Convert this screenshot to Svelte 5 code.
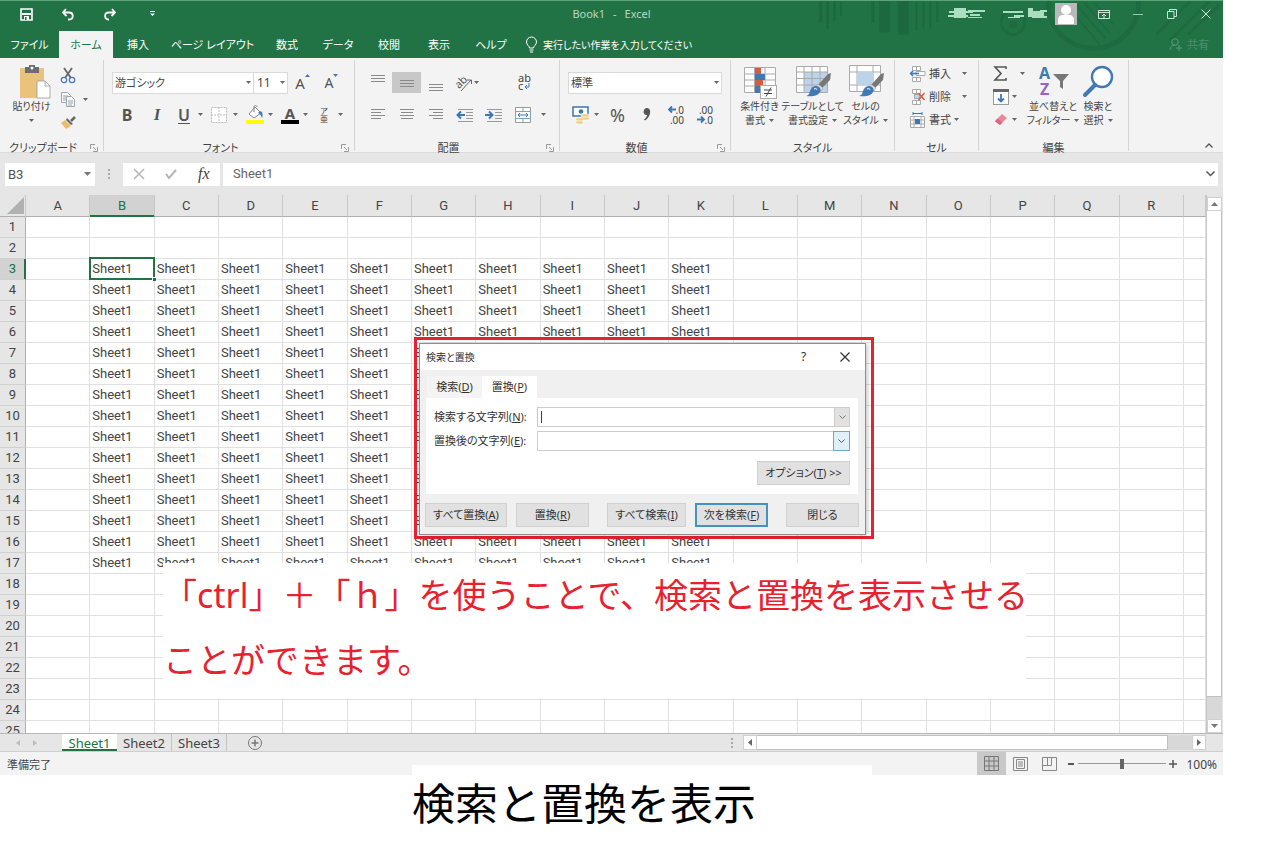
<script>
  const tabs = ['ファイル', 'ホーム', '挿入', 'ページ レイアウト', '数式', 'データ', '校閲', '表示', 'ヘルプ'];
  const columns = 'ABCDEFGHIJKLMNOPQR'.split('');
  const rows = Array.from({ length: 25 }, (_, i) => i + 1);
  const sheets = ['Sheet1', 'Sheet2', 'Sheet3'];
  const selected = { column: 'B', row: 3 };

  function cellValue(column, row) {
    return row >= 3 && row <= 17 && column >= 'B' && column <= 'K' ? 'Sheet1' : '';
  }
  const isSelected = (column, row) => column === selected.column && row === selected.row;

  const alignTop = [[0, 2, 14], [0, 5, 14], [0, 8, 14]];
  const alignMiddle = [[0, 7, 14], [0, 10, 14], [0, 13, 14]];
  const alignBottom = [[0, 11, 14], [0, 14, 14], [0, 17, 14]];
  const left = [[0, 4, 14], [0, 7, 10], [0, 10, 14], [0, 13, 10]];
  const center = [[0, 4, 14], [1, 7, 12], [0, 10, 14], [1, 13, 12]];
  const right = [[0, 4, 14], [4, 7, 10], [0, 10, 14], [4, 13, 10]];
</script>

{#snippet arrow()}
  <svg class="arrow" width="5" height="3" viewBox="0 0 5 3" aria-hidden="true"><path d="M0 0h5L2.500 3z" fill="#666" /></svg>
{/snippet}

{#snippet lines(list, name, active = false)}
  <button class="tool cell" class:active aria-label={name}>
    <svg width="14" height="20" viewBox="0 0 14 20">
      {#each list as [x, y, w]}
        <rect {x} {y} width={w} height="1" fill="#8a8a8a" />
      {/each}
    </svg>
  </button>
{/snippet}

{#snippet launcher(name)}
  <button class="launcher" aria-label={name}>
    <svg width="8" height="8" viewBox="0 0 8 8" fill="none" stroke="#999"><path d="M.5 5V.5H5M3 3l3 3M7.500 3v4.500H3" /></svg>
  </button>
{/snippet}

{#snippet brush()}
  <path d="M34 9l3-1-1 7-8 8-4-3z" fill="#777" />
  <path d="M24 19l5 4-2 3-5-4z" fill="#ddd" stroke="#999" stroke-width=".6" />
  <path d="M22 21c3 0 6 3 4 6-2 4-8 5-14 4 4-1 3-4 5-7 1-2 3-3 5-3z" fill="#4179b5" />
  <path d="M20 24c2-1 3 0 3 1" stroke="#fff" fill="none" />
{/snippet}

<div class="window">
  <header class="top">
    <svg class="pattern" width="430" height="58" viewBox="0 0 430 58" aria-hidden="true">
      <g fill="#1d693f">
        <rect x="23" width="3" height="22" /><rect x="30" width="3" height="28" /><rect x="37" width="3" height="20" />
        <rect x="44" width="2" height="15" /><rect x="76" width="3" height="22" /><rect x="84" width="11" height="32" />
        <rect x="103" width="11" height="34" /><rect x="121" width="2" height="30" /><rect x="128" width="2" height="28" />
        <rect x="135" width="2" height="28" /><rect x="142" width="2" height="22" />
      </g>
      <g fill="none" stroke="#1e6b41" stroke-width="5">
        <circle cx="302" cy="2" r="46" />
        <circle cx="220" cy="22" r="12" stroke-width="3" />
        <path d="M273 2l35 42M283 2l31 36M293 2l25 30M303 2l19 22" stroke-width="2" />
        <path d="M366 34L401 0M380 40L420 0M398 34L430 4" stroke-width="3" />
      </g>
      <circle cx="220" cy="24" r="4" fill="#1e6b41" />
    </svg>

    <div class="titlebar">
      <div class="quick">
        <button aria-label="上書き保存">
          <svg width="13" height="13" viewBox="0 0 13 13"><path d="M1 1h11v11H1z" fill="none" stroke="#fff" stroke-width="1.600" /><path d="M2 5h9v2H2zM4 8h5v4H4z" fill="#fff" /><path d="M5 9h1.500v3H5z" fill="#217346" /></svg>
        </button>
        <button aria-label="元に戻す">
          <svg width="14" height="13" viewBox="0 0 14 13" fill="none" stroke="#fff" stroke-width="1.800"><path d="M5 1L2 4.500 5.500 8M2 4.500h6c5 0 5 7 0 7H7" /></svg>
        </button>
        <button aria-label="やり直し">
          <svg width="14" height="13" viewBox="0 0 14 13" fill="none" stroke="#fff" stroke-width="1.800"><path d="M9 1l3 3.500L8.500 8M12 4.500H6c-5 0-5 6-1 7h1" /></svg>
        </button>
        <button aria-label="クイック アクセスのカスタマイズ">
          <svg width="5" height="6" viewBox="0 0 5 6" fill="#fff"><path d="M0 0h5v1H0zM0 2.500h5L2.500 5z" /></svg>
        </button>
      </div>
      <div class="title"><span>Book1</span><span>-</span><span>Excel</span></div>
      <div class="account">
        <svg class="names" width="100" height="16" viewBox="0 0 100 16" aria-hidden="true" fill="#a9dfc0">
          <rect x="1" y="5" width="24" height="2" /><rect x="6" y="2" width="12" height="10" /><rect x="0" y="9" width="20" height="2" /><rect x="20" y="4" width="17" height="2" /><rect x="22" y="8" width="10" height="2" /><rect x="20" y="11" width="14" height="1" />
          <rect x="55" y="5" width="20" height="2" /><rect x="66" y="9" width="10" height="2" /><rect x="60" y="11" width="12" height="1" /><rect x="80" y="2" width="5" height="9" /><rect x="84" y="5" width="12" height="7" /><rect x="92" y="4" width="7" height="2" /><rect x="92" y="10" width="7" height="2" />
        </svg>
        <svg class="avatar" width="22" height="22" viewBox="0 0 22 22" aria-hidden="true"><rect width="22" height="22" fill="#b9b9b9" /><circle cx="11" cy="7" r="5" fill="#fff" /><path d="M3 21v-4c0-3 2-5 5-5h6c3 0 5 2 5 5v4z" fill="#fff" /></svg>
        <button aria-label="リボンの表示オプション"><svg width="12" height="9" viewBox="0 0 12 9" fill="none" stroke="#cfe5d8"><path d="M.5 .5h11v8H.5zM.5 2.500h11M6 8V4M4 6l2-2 2 2" /></svg></button>
        <button aria-label="最小化"><svg width="10" height="9" viewBox="0 0 10 9" stroke="#9cc8af"><path d="M0 4.500h10" /></svg></button>
        <button aria-label="元に戻す（縮小）"><svg width="10" height="10" viewBox="0 0 10 10" fill="none" stroke="#cfe5d8"><path d="M.5 2.500h6.500v7H.5zM2.500 2.500v-2h7v7H7" /></svg></button>
        <button aria-label="閉じる"><svg width="10" height="10" viewBox="0 0 10 10" stroke="#cfe5d8"><path d="M.5 .5l9 9M9.500 .5l-9 9" /></svg></button>
      </div>
    </div>

    <nav class="tabs">
      {#each tabs as tab, i}
        <button class:current={i === 1}>{tab}</button>
      {/each}
      <button class="tell">
        <svg width="11" height="16" viewBox="0 0 11 16" fill="none" stroke="#fff"><path d="M3.500 11c0-2-3-3-3-6a5 5 0 0 1 10 0c0 3-3 4-3 6zM3.500 13h4M4 15h3" /></svg>
        実行したい作業を入力してください
      </button>
      <button class="share">
        <svg width="13" height="13" viewBox="0 0 13 13" fill="none" stroke="#5b9a78"><circle cx="6" cy="4" r="3.300" /><path d="M1 12c0-3 2-5 5-5M10 7v6M7 10h6" /></svg>
        共有
      </button>
    </nav>
  </header>

  <section class="ribbon" aria-label="ホーム">
    <div class="group clipboard">
      <div class="body">
        <button class="big paste">
          <svg width="32" height="34" viewBox="0 0 32 34"><rect x="1" y="3" width="24" height="30" fill="#e9c27c" /><path d="M6 2h4V0h6v2h4v6H6z" fill="#6b6b73" /><circle cx="13" cy="3" r="1.500" fill="#fff" /><path d="M18 16h8l5 5v12H18z" fill="#fff" stroke="#999" stroke-width=".8" /><path d="M26 16v5h5" fill="none" stroke="#999" stroke-width=".8" /></svg>
          <span>貼り付け</span>
          {@render arrow()}
        </button>
        <div class="stack">
          <button class="tool" aria-label="切り取り"><svg width="16" height="17" viewBox="0 0 16 17" fill="none"><path d="M4 1l7 10M12 1L5 11" stroke="#666" stroke-width="1.800" /><circle cx="4" cy="13" r="2.700" stroke="#4179b5" stroke-width="1.200" /><circle cx="12" cy="13" r="2.700" stroke="#4179b5" stroke-width="1.200" /></svg></button>
          <button class="tool" aria-label="コピー"><svg width="16" height="17" viewBox="0 0 16 17" fill="#f8f8f8" stroke="#9aa5ae"><path d="M1.500 1.500h6l3 3v7h-9zM3 5h5M3 7h5M3 9h5" /><path d="M6.500 5.500h5l3 3v7h-8zM8 10h5M8 12h5M8 14h4" /></svg><span class="push">{@render arrow()}</span></button>
          <button class="tool" aria-label="書式のコピー/貼り付け"><svg width="16" height="14" viewBox="0 0 16 14"><path d="M15 1l-4 4" stroke="#666" stroke-width="2.500" /><path d="M7 2l6 6-2 1-5-5z" fill="#666" /><path d="M5 4l6 6-5 3-5-6z" fill="#e9bd6b" /></svg></button>
        </div>
      </div>
      <footer><span></span><span>クリップボード</span>{@render launcher('クリップボードの設定')}</footer>
    </div>

    <div class="group font">
      <div class="body rows">
        <div class="line">
          <select class="combo face" aria-label="フォント"><option>游ゴシック</option></select>
          <select class="combo size" aria-label="フォント サイズ"><option>11</option></select>
          <button class="tool grow" aria-label="フォント サイズの拡大">A<svg width="5" height="3" viewBox="0 0 5 3"><path d="M0 3h5L2.500 0z" fill="#4179b5" /></svg></button>
          <button class="tool grow small" aria-label="フォント サイズの縮小">A<svg width="5" height="3" viewBox="0 0 5 3"><path d="M0 0h5L2.500 3z" fill="#4179b5" /></svg></button>
        </div>
        <div class="line">
          <button class="tool letter"><b>B</b></button>
          <button class="tool letter"><i>I</i></button>
          <button class="tool split letter"><u>U</u>{@render arrow()}</button>
          <button class="tool split" aria-label="罫線"><svg width="16" height="16" viewBox="0 0 16 16" fill="#fff" stroke="#bbb"><path d="M.5 .5h15v15H.5zM8 0v16M0 8h16" stroke-dasharray="2 1" /></svg>{@render arrow()}</button>
          <button class="tool split" aria-label="塗りつぶしの色"><svg width="18" height="19" viewBox="0 0 18 19"><path d="M9 2l6 6-7 5-5-4z" fill="#fff" stroke="#888" /><path d="M8 7V2c0-2 3-2 3 0" fill="none" stroke="#888" /><path d="M14 6c3 1 3 4 2 7-1-2-1-4-4-5z" fill="#4179b5" /><rect y="15" width="18" height="4" fill="#ff0" /></svg>{@render arrow()}</button>
          <button class="tool split color" aria-label="フォントの色"><b>A</b>{@render arrow()}</button>
          <button class="tool split ruby" aria-label="ふりがな"><span><small>ア</small><small>亜</small></span>{@render arrow()}</button>
        </div>
      </div>
      <footer><span></span><span>フォント</span>{@render launcher('フォントの設定')}</footer>
    </div>

    <div class="group align">
      <div class="body rows">
        <div class="line">
          {@render lines(alignTop, '上揃え')}
          {@render lines(alignMiddle, '上下中央揃え', true)}
          {@render lines(alignBottom, '下揃え')}
          <button class="tool orient" aria-label="方向"><svg width="18" height="18" viewBox="0 0 18 18"><text x="0" y="12" font-size="11" transform="rotate(-45 6 9)" fill="#555">ab</text><path d="M6 17L16 6M12 6h4.500v4" fill="none" stroke="#666" /></svg>{@render arrow()}</button>
          <button class="tool cell" aria-label="折り返して全体を表示する"><svg width="16" height="18" viewBox="0 0 16 18"><text x="3" y="8" font-size="11" fill="#444">ab</text><text x="3" y="16" font-size="11" fill="#444">c</text><path d="M14 9v4h-4M12 11l-2 2 2 2" fill="none" stroke="#4179b5" /></svg></button>
        </div>
        <div class="line">
          {@render lines(left, '左揃え')}
          {@render lines(center, '中央揃え')}
          {@render lines(right, '右揃え')}
          <button class="tool cell" aria-label="インデントを減らす"><svg width="17" height="14" viewBox="0 0 17 14"><path d="M2 1.500h15M10 4.500h7M10 7.500h7M10 10.500h7M2 13.500h15" stroke="#999" /><path d="M9 7H2M5 3.500L1.500 7 5 10.500" stroke="#3b76b5" stroke-width="2" fill="none" /></svg></button>
          <button class="tool cell" aria-label="インデントを増やす"><svg width="17" height="14" viewBox="0 0 17 14"><path d="M2 1.500h15M10 4.500h7M10 7.500h7M10 10.500h7M2 13.500h15" stroke="#999" /><path d="M0 7h7M4 3.500L7.500 7 4 10.500" stroke="#3b76b5" stroke-width="2" fill="none" /></svg></button>
          <button class="tool cell" aria-label="セルを結合して中央揃え"><svg width="16" height="16" viewBox="0 0 16 16" fill="none"><path d="M.5 .5h15v15H.5zM8 0v4M8 12v4" stroke="#999" fill="#fff" /><path d="M.5 4.500h15v7H.5z" stroke="#7ba4cc" fill="#fff" /><path d="M3 8h10M5 6L3 8l2 2M11 6l2 2-2 2" stroke="#3b76b5" /></svg></button>
          <button class="tool drop" aria-label="結合の種類">{@render arrow()}</button>
        </div>
      </div>
      <footer><span></span><span>配置</span>{@render launcher('配置の設定')}</footer>
    </div>

    <div class="group number">
      <div class="body rows">
        <div class="line"><select class="combo format" aria-label="数値の書式"><option>標準</option></select></div>
        <div class="line">
          <button class="tool split money" aria-label="通貨表示形式"><svg width="18" height="18" viewBox="0 0 18 18"><rect x="1" y="1" width="15" height="9" fill="#fff" stroke="#3b76b5" stroke-width="1.500" /><circle cx="9" cy="5.500" r="2.300" fill="#3b76b5" /><g fill="#f0cd85" stroke="#fff" stroke-width=".5"><rect x="9" y="8" width="8" height="3" rx="1" /><rect x="9" y="11" width="8" height="3" rx="1" /><rect x="4" y="12" width="7" height="3" rx="1" /><rect x="4" y="15" width="7" height="3" rx="1" /></g></svg>{@render arrow()}</button>
          <button class="tool cell percent">%</button>
          <button class="tool cell" aria-label="桁区切りスタイル"><svg width="8" height="13" viewBox="0 0 8 13"><path d="M4 0c5 0 4 9-2 12.500l-1-1c2-1.500 3-3 3-4.500C-1 7 0 0 4 0z" fill="#555" /></svg></button>
          <button class="tool cell digits" aria-label="小数点以下の表示桁数を増やす"><span><svg width="8" height="7" viewBox="0 0 8 7"><path d="M8 3.500H1M4 .5l-3 3 3 3" stroke="#3b76b5" stroke-width="1.800" fill="none" /></svg>.0</span><span>.00</span></button>
          <button class="tool cell digits" aria-label="小数点以下の表示桁数を減らす"><span>.00</span><span><svg width="8" height="7" viewBox="0 0 8 7"><path d="M0 3.500h7M4 .5l3 3-3 3" stroke="#3b76b5" stroke-width="1.800" fill="none" /></svg>.0</span></button>
        </div>
      </div>
      <footer><span></span><span>数値</span>{@render launcher('数値の設定')}</footer>
    </div>

    <div class="group styles">
      <div class="body">
        <button class="big">
          <svg width="34" height="34" viewBox="0 0 34 34"><path d="M1.500 2.500h31v25h-31zM1 9h32M1 15h32M1 21h32M11.500 2v26M22 2v26" fill="#fff" stroke="#aaa" /><rect x="12" y="3" width="6" height="6" fill="#d65c3c" /><rect x="12" y="9" width="10" height="6" fill="#4179b5" /><rect x="12" y="15" width="8" height="6" fill="#d65c3c" /><rect x="12" y="21" width="5" height="7" fill="#4179b5" /><rect x="17.500" y="20.500" width="16" height="13" fill="#fff" stroke="#aaa" /><path d="M21 25h8M21 28.500h8M28 22.500l-5 9" stroke="#444" /></svg>
          <span>条件付き</span><span>書式 {@render arrow()}</span>
        </button>
        <button class="big">
          <svg width="38" height="34" viewBox="0 0 38 34"><rect x="2.500" y="1.500" width="31" height="26" fill="#fff" /><rect x="10" y="7" width="23" height="20" fill="#bdd3ea" /><path d="M2.500 1.500h31v26h-31zM2 7h32M2 13.500h32M2 20h32M10 1v27M18 1v27M26 1v27" fill="none" stroke="#aaa" />{@render brush()}</svg>
          <span>テーブルとして</span><span>書式設定 {@render arrow()}</span>
        </button>
        <button class="big">
          <svg width="38" height="34" viewBox="0 0 38 34"><rect x="2.500" y="0.500" width="31" height="26" fill="#fff" /><path d="M2.500 .5h31v26h-31zM2 7h32M2 20h32M10 0v27M26 0v27" fill="none" stroke="#aaa" /><rect x="10" y="7" width="16" height="13" fill="#bdd3ea" />{@render brush()}</svg>
          <span>セルの</span><span>スタイル {@render arrow()}</span>
        </button>
      </div>
      <footer class="plain"><span>スタイル</span></footer>
    </div>

    <div class="group cells">
      <div class="body stack">
        <button class="tool text"><svg width="17" height="16" viewBox="0 0 17 16" fill="#fff" stroke="#aaa"><path d="M3.500 .5h8v4h-8zM3.500 11.500h8v4h-8zM7.500 0v4.500M7.500 11.500v4M7 5.500h9v4H7z" /><path d="M10 7.500H1.500M4 5L1.500 7.500 4 10" stroke="#3b76b5" stroke-width="1.400" fill="none" /></svg>挿入<span class="push">{@render arrow()}</span></button>
        <button class="tool text"><svg width="17" height="16" viewBox="0 0 17 16" fill="#fff" stroke="#aaa"><path d="M3.500 .5h8v4h-8zM3.500 11.500h8v4h-8zM7.500 0v4.500M7.500 11.500v4" /><rect x="5.500" y="5.500" width="5" height="4" fill="#bdd3ea" /><path d="M9.500 4l6 7M15.500 4l-6 7" stroke="#d65c3c" stroke-width="1.500" /></svg>削除<span class="push">{@render arrow()}</span></button>
        <button class="tool text"><svg width="17" height="16" viewBox="0 0 17 16" fill="#fff" stroke="#aaa"><path d="M1.500 4.500h14v11h-14zM1 8h15M1 12h15M5 4v12M12 4v12" /><rect x="6" y="7" width="5" height="5" fill="#3b76b5" stroke="none" /><path d="M4 1.500h9M4 0v3M13 0v3" stroke="#3b76b5" /></svg>書式 {@render arrow()}</button>
      </div>
      <footer class="plain"><span>セル</span></footer>
    </div>

    <div class="group edit">
      <div class="body">
        <div class="stack">
          <button class="tool" aria-label="合計"><svg width="16" height="15" viewBox="0 0 16 15" fill="none" stroke="#555" stroke-width="1.600"><path d="M13 3V1H2l6 6.500L2 14h11v-2" /></svg><span class="push">{@render arrow()}</span></button>
          <button class="tool" aria-label="フィル"><svg width="16" height="16" viewBox="0 0 16 16"><rect x=".5" y=".5" width="15" height="15" fill="#fff" stroke="#999" /><rect width="16" height="3" fill="#666" /><path d="M8 5v7M5 9.500l3 3 3-3" fill="none" stroke="#3b76b5" stroke-width="1.800" /></svg>{@render arrow()}</button>
          <button class="tool" aria-label="クリア"><svg width="16" height="14" viewBox="0 0 16 14"><path d="M9 1l5 4-7 7-5-4z" fill="#e98a9c" /><path d="M4.500 5.500l5 4L7 12 2 8.500z" fill="#d8687f" /></svg>{@render arrow()}</button>
        </div>
        <button class="big">
          <svg width="34" height="34" viewBox="0 0 34 34"><text x="3" y="14" font-size="16" font-weight="700" fill="#4179b5">A</text><text x="4" y="30" font-size="16" font-weight="700" fill="#9b62c0">Z</text><path d="M17 9h16l-6 7v8l-3-2v-6z" fill="#777" /></svg>
          <span>並べ替えと</span><span>フィルター {@render arrow()}</span>
        </button>
        <button class="big find">
          <svg width="34" height="34" viewBox="0 0 34 34" fill="none" stroke="#4179b5"><circle cx="21" cy="12" r="10" stroke-width="2.400" fill="#fff" /><path d="M14 20L4 30" stroke-width="4" stroke-linecap="round" /></svg>
          <span>検索と</span><span>選択 {@render arrow()}</span>
        </button>
      </div>
      <footer class="plain"><span>編集</span></footer>
    </div>
    <button class="collapse" aria-label="リボンを折りたたむ"><svg width="8" height="5" viewBox="0 0 8 5" fill="none" stroke="#555" stroke-width="1.300"><path d="M.5 4.500L4 1l3.500 3.500" /></svg></button>
  </section>

  <div class="formula">
    <div class="namebox">
      <input value="B3" aria-label="名前ボックス" />
      <button aria-label="名前の一覧"><svg width="7" height="4" viewBox="0 0 7 4"><path d="M0 0h7L3.500 4z" fill="#777" /></svg></button>
    </div>
    <span class="dots"></span>
    <div class="entry">
      <button aria-label="キャンセル"><svg width="10" height="10" viewBox="0 0 10 10" stroke="#b5b5b5" stroke-width="1.500"><path d="M0 0l10 10M10 0L0 10" /></svg></button>
      <button aria-label="入力"><svg width="12" height="10" viewBox="0 0 12 10" fill="none" stroke="#b5b5b5" stroke-width="2"><path d="M1 5l3 4 7-8" /></svg></button>
      <button class="fx"><i>fx</i></button>
    </div>
    <div class="value">
      <input value="Sheet1" aria-label="数式バー" />
      <button aria-label="数式バーの展開"><svg width="9" height="6" viewBox="0 0 9 6" fill="none" stroke="#555" stroke-width="1.500"><path d="M.5 .5l4 4 4-4" /></svg></button>
    </div>
  </div>

  <main class="workspace">
    <div class="viewport">
      <table>
        <colgroup><col class="c-head" />{#each columns as c (c)}<col />{/each}<col class="c-rest" /></colgroup>
        <thead>
          <tr>
            <th class="corner" aria-label="すべて選択"><svg width="17" height="17" viewBox="0 0 17 17"><path d="M17 0v17H0z" fill="#b1b1b1" /></svg></th>
            {#each columns as c (c)}<th scope="col" class:on={c === selected.column}>{c}</th>{/each}
            <th></th>
          </tr>
        </thead>
        <tbody>
          {#each rows as r (r)}
            <tr>
              <th scope="row" class:on={r === selected.row}>{r}</th>
              {#each columns as c (c)}<td class:picked={isSelected(c, r)}>{cellValue(c, r)}</td>{/each}
              <td></td>
            </tr>
          {/each}
        </tbody>
      </table>
    </div>
    <div class="vscroll">
      <button aria-label="上へ"><svg width="7" height="4" viewBox="0 0 7 4"><path d="M0 4h7L3.500 0z" fill="#777" /></svg></button>
      <div class="thumb"></div>
      <div class="track"></div>
      <button aria-label="下へ"><svg width="7" height="4" viewBox="0 0 7 4"><path d="M0 0h7L3.500 4z" fill="#777" /></svg></button>
    </div>

    <div class="highlight">
      <form class="dialog" aria-label="検索と置換" onsubmit={(e) => e.preventDefault()}>
        <div class="caption">
          <span>検索と置換</span>
          <button type="button">?</button>
          <button type="button" aria-label="閉じる"><svg width="10" height="10" viewBox="0 0 10 10" stroke="#333" stroke-width="1.200"><path d="M.5 .5l9 9M9.500 .5l-9 9" /></svg></button>
        </div>
        <div class="pages">
          <button type="button">検索(<u>D</u>)</button>
          <button type="button" class="front">置換(<u>P</u>)</button>
        </div>
        <div class="panel">
          <div class="field">
            <label for="find">検索する文字列(<u>N</u>):</label>
            <div class="picker"><span class="caret"></span><input id="find" /><button type="button" aria-label="検索履歴"><svg width="7" height="4" viewBox="0 0 7 4" fill="none" stroke="#777"><path d="M.5 .5l3 3 3-3" /></svg></button></div>
          </div>
          <div class="field">
            <label for="replace">置換後の文字列(<u>E</u>):</label>
            <div class="picker"><input id="replace" /><button type="button" class="hot" aria-label="置換履歴"><svg width="7" height="4" viewBox="0 0 7 4" fill="none" stroke="#555"><path d="M.5 .5l3 3 3-3" /></svg></button></div>
          </div>
          <button type="button" class="push-button options">オプション(<u>T</u>) &gt;&gt;</button>
        </div>
        <div class="actions">
          <button type="button" class="push-button w82">すべて置換(<u>A</u>)</button>
          <button type="button" class="push-button w73">置換(<u>R</u>)</button>
          <button type="button" class="push-button w79 apart">すべて検索(<u>I</u>)</button>
          <button type="button" class="push-button w73 default">次を検索(<u>F</u>)</button>
          <button type="button" class="push-button w73 apart">閉じる</button>
        </div>
      </form>
    </div>

    <p class="note">「ctrl」＋「ｈ」を使うことで、検索と置換を表示させる<br />ことができます。</p>
  </main>

  <div class="sheetbar">
    <div class="steps">
      <svg width="4" height="6" viewBox="0 0 4 6"><path d="M4 0v6L0 3z" fill="#bbb" /></svg>
      <svg width="4" height="6" viewBox="0 0 4 6"><path d="M0 0v6l4-3z" fill="#bbb" /></svg>
    </div>
    {#each sheets as sheet, i}
      <button class="sheet" class:current={i === 0}>{sheet}</button>
    {/each}
    <button class="add" aria-label="新しいシート"><svg width="14" height="14" viewBox="0 0 14 14" fill="none" stroke="#777"><circle cx="7" cy="7" r="6.500" /><path d="M7 3.500v7M3.500 7h7" stroke-width="1.500" /></svg></button>
    <span class="dots"></span>
    <div class="hscroll">
      <button aria-label="左へ"><svg width="4" height="7" viewBox="0 0 4 7"><path d="M4 0v7L0 3.500z" fill="#666" /></svg></button>
      <div class="thumb"></div>
      <div class="track"></div>
      <button aria-label="右へ"><svg width="4" height="7" viewBox="0 0 4 7"><path d="M0 0v7l4-3.500z" fill="#666" /></svg></button>
    </div>
  </div>

  <footer class="status">
    <span class="ready">準備完了</span>
    <button class="view active" aria-label="標準"><svg width="15" height="15" viewBox="0 0 15 15" fill="none" stroke="#777"><path d="M.5 .5h14v14H.5zM5 0v15M10 0v15M0 5h15M0 10h15" /></svg></button>
    <button class="view" aria-label="ページ レイアウト"><svg width="15" height="14" viewBox="0 0 15 14" fill="none" stroke="#888"><path d="M.5 .5h14v13H.5zM3.500 2.500h8v9h-8zM5 5h5M5 7h5M5 9h5" /></svg></button>
    <button class="view" aria-label="改ページ プレビュー"><svg width="15" height="14" viewBox="0 0 15 14" fill="none" stroke="#888"><path d="M.5 .5h14v13H.5zM5.500 0v8M.5 8.500h9M9.500 0v8.500" /></svg></button>
    <button class="step" aria-label="縮小"><svg width="6" height="2" viewBox="0 0 6 2"><path d="M0 0h6v2H0z" fill="#555" /></svg></button>
    <input class="zoom" type="range" min="0" max="100" value="50" aria-label="ズーム" />
    <button class="step" aria-label="拡大"><svg width="8" height="8" viewBox="0 0 8 8" stroke="#555" stroke-width="1.500"><path d="M4 0v8M0 4h8" /></svg></button>
    <span class="percentage">100%</span>
  </footer>
</div>
<h1>検索と置換を表示</h1>

<style>
  :global(body) { margin: 0; background: #fff; }
  .window {
    margin-right: 56px;
    color: #444;
    font: 11px/14px "Noto Sans", "Noto Sans CJK JP", sans-serif;
    font-feature-settings: "palt";
  }
  button, input, select {
    margin: 0; padding: 0; border: 0; background: none; color: inherit;
    font: inherit; font-feature-settings: inherit; border-radius: 0; min-width: 0; outline: none;
  }
  svg { display: block; flex: none; overflow: visible; }
  button { display: flex; align-items: center; justify-content: center; white-space: nowrap; }

  .top { position: relative; background: #217346; border-top: 1px solid #5da37c; box-sizing: border-box; height: 58px; color: #fff; }
  .pattern { position: absolute; right: 0; top: 0; height: 57px; overflow: hidden; }
  .titlebar { position: relative; display: grid; grid-template-columns: 1fr auto 1fr; height: 26px; align-items: center; }
  .quick { display: flex; padding-left: 5px; }
  .quick button { width: 42px; height: 26px; }
  .title { display: flex; gap: 8px; color: #b7d8c5; }
  .account { display: flex; justify-content: flex-end; align-items: center; }
  .account button { width: 34px; height: 24px; }
  .names { margin-right: 7px; }
  .avatar { margin-right: 10px; }
  .tabs { position: relative; display: grid; grid-template-columns: 59px 54px 50px 99px 50px 52px 50px 50px 54px 1fr 54px; margin-top: 4px; height: 27px; }
  .tabs .current { background: #f3f3f3; color: #217346; }
  .tabs .tell { justify-content: flex-start; gap: 6px; padding-left: 8px; font-size: 10px; }
  .tabs .share { gap: 5px; justify-content: flex-start; color: #4f906d; }

  .ribbon { display: flex; height: 95px; box-sizing: border-box; background: #f3f3f3; border-bottom: 1px solid #dcdcdc; padding: 2px 0 1px; }
  .group { display: flex; flex-direction: column; box-sizing: border-box; border-right: 1px solid #d4d4d4; flex: none; }
  .body { display: flex; flex: 1; min-height: 0; align-items: flex-start; }
  .group footer { display: grid; grid-template-columns: 1px 1fr 18px; align-items: center; height: 10px; text-align: center; }
  .group footer.plain { grid-template-columns: 1fr; }
  .group footer span { white-space: nowrap; }
  .launcher { height: 10px; }
  .clipboard { width: 104px; }
  .font { width: 251px; }
  .align { width: 205px; }
  .number { width: 171px; }
  .styles { width: 164px; }
  .cells { width: 84px; }
  .edit { width: 150px; }
  .big { flex-direction: column; justify-content: flex-start; font-size: 10px; line-height: 14px; padding-top: 5px; }
  .big span { display: flex; align-items: center; gap: 4px; }
  .paste { width: 56px; padding-left: 7px; font-size: 10px; }
  .paste > svg:first-child { margin-left: 6px; }
  .paste :global(.arrow) { margin-top: 6px; }
  .stack { display: flex; flex-direction: column; padding-top: 2px; }
  .stack .tool { justify-content: flex-start; gap: 3px; height: 23px; }
  .push { margin-left: 8px; }
  .clipboard .stack { padding-top: 3px; }
  .clipboard .stack .tool { height: 24px; padding-left: 4px; }
  .clipboard .push { margin-left: 4px; }
  .rows { flex-direction: column; padding: 12px 8px 0; gap: 11px; }
  .line { display: flex; height: 21px; align-items: center; }
  .line .tool { height: 21px; }
  .combo {
    appearance: none; box-sizing: border-box; height: 22px; padding: 0 4px 0 2px; background: #fff; border: 1px solid #dadada;
    background-image: url("data:image/svg+xml,%3Csvg xmlns='http://www.w3.org/2000/svg' width='5' height='3'%3E%3Cpath d='M0 0h5L2.500 3z' fill='%23666'/%3E%3C/svg%3E");
    background-repeat: no-repeat; background-position: right 2px center;
  }
  .face { width: 142px; }
  .size { width: 34px; border-left: 0; font-size: 12px; padding-left: 3px; }
  .format { width: 154px; }
  .grow { width: 29px; font-size: 15px; align-items: flex-start; line-height: 22px; color: #555; }
  .grow svg { margin-top: 2px; }
  .small { font-size: 14px; }
  .letter { width: 30px; font-size: 16px; color: #555; }
  .letter i { font-family: "Liberation Serif", serif; font-weight: 700; font-size: 17px; }
  .letter u { font-weight: 600; text-underline-offset: 2px; text-decoration-thickness: 1px; }
  .split { width: 35px; justify-content: flex-start; padding-left: 4px; }
  .split :global(.arrow) { margin-left: auto; margin-right: 4px; }
  .split.letter { padding-left: 6px; width: 35px; }
  .color b { width: 18px; text-align: center; font-size: 15px; line-height: 15px; border-bottom: 4px solid #000; height: 14px; color: #555; }
  .ruby span { display: flex; flex-direction: column; width: 16px; align-items: center; }
  .ruby small { font-size: 8px; line-height: 8px; }
  .cell { width: 29px; }
  .active { background: #c8c8c8; }
  .orient { width: 58px; justify-content: flex-start; padding-left: 5px; gap: 1px; }
  .drop { width: 12px; }
  .percent { font-size: 18px; color: #555; }
  .digits { flex-direction: column; align-items: flex-end; font-size: 10px; line-height: 10px; padding-right: 6px; }
  .digits span { display: flex; align-items: center; }
  .styles .body { justify-content: center; gap: 2px; padding: 0 3px; }
  .styles .big { flex: 1; }
  .cells .stack { padding-left: 14px; align-items: flex-start; }
  .edit .stack { padding-left: 14px; width: 34px; }
  .edit .big { width: 52px; }
  .edit .find { width: 38px; }
  .collapse { margin: auto 8px 1px auto; width: 12px; height: 10px; }

  .formula { display: flex; align-items: center; height: 42px; background: #e6e6e6; padding: 0 5px; }
  .formula > div { display: flex; height: 23px; background: #fff; }
  .namebox { width: 90px; }
  .namebox input { flex: 1; padding: 2px 0 0 3px; font: 13px/20px Roboto, sans-serif; color: #555; }
  .namebox button { width: 16px; }
  .dots { width: 2px; height: 10px; background: repeating-linear-gradient(#aaa 0 2px, transparent 2px 4px); }
  .formula .dots { margin: 0 13px; }
  .entry { width: 97px; }
  .entry button { flex: 1; }
  .entry .fx { font: 16px "Liberation Serif", serif; color: #444; }
  .value { flex: 1; margin-left: 3px; }
  .value input { flex: 1; padding-left: 10px; font: 13px/20px Roboto, sans-serif; color: #666; }
  .value button { width: 16px; }

  .workspace { position: relative; display: flex; height: 538px; }
  .viewport { flex: 1; overflow: hidden; }
  table { width: 100%; table-layout: fixed; border-collapse: separate; border-spacing: 0; font: 13px/20px Roboto, sans-serif; }
  .c-head { width: 26px; }
  .c-rest { width: 22px; }
  th, td { box-sizing: border-box; height: 21px; padding: 0 2px; border: solid #e0e0e0; border-width: 0 1px 1px 0; text-align: left; font-weight: 400; color: #444; white-space: nowrap; }
  thead th { height: 22px; background: #e6e6e6; text-align: center; border-color: #c8c8c8; border-bottom-color: #b0b0b0; }
  thead .on { background: #d2d2d2; color: #217346; border-bottom-color: #217346; box-shadow: inset 0 -1px #217346; }
  tbody th { background: #e6e6e6; text-align: center; padding: 0; border-right-color: #b0b0b0; border-bottom-color: #d0d0d0; }
  tbody .on { background: #d2d2d2; color: #217346; border-right-color: #217346; box-shadow: inset -1px 0 #217346; }
  .corner { padding: 0 1px; }
  .corner svg { margin-left: auto; }
  .picked { position: relative; }
  .picked::before { content: ""; position: absolute; inset: -2px -1px -1px -1px; border: 2px solid #217346; }
  .picked::after { content: ""; position: absolute; right: -2px; bottom: -2px; width: 3px; height: 3px; background: #217346; border: solid #fff; border-width: 1px 0 0 1px; }

  .vscroll { display: flex; flex-direction: column; width: 17px; padding-top: 2px; background: #e6e6e6; box-sizing: border-box; border-left: 1px solid #c8c8c8; }
  .vscroll button { height: 14px; background: #fff; margin-right: 1px; border: 1px solid #d0d0d0; }
  .vscroll .thumb { flex: 1; background: #fff; margin-right: 1px; border: 1px solid #c0c0c0; border-width: 0 1px 1px 0; }
  .vscroll .track { height: 22px; background: #d8d8d8; margin-right: 1px; }

  .highlight { position: absolute; left: 414px; top: 142px; border: 3px solid #e8212f; padding: 3px 5px 1px 2px; box-sizing: border-box; width: 460px; }
  .dialog { background: #f0f0f0; border: 1px solid #8a8f8f; box-shadow: 2px 1px 4px #0003; color: #333; }
  .caption { display: flex; height: 26px; background: #fff; align-items: center; padding-left: 6px; font-size: 10px; }
  .caption span { flex: 1; }
  .caption button { width: 41px; height: 26px; font-size: 12px; }
  .pages { display: flex; padding: 6px 0 0 7px; }
  .pages button { width: 55px; height: 22px; background: #f4f4f4; }
  .pages .front { background: #fff; }
  .panel { display: flex; flex-direction: column; gap: 4px; background: #fff; margin: 0 7px 0 6px; height: 96px; padding: 9px 8px; box-sizing: border-box; }
  .field { display: flex; align-items: center; }
  .field label { width: 103px; white-space: nowrap; }
  .picker { display: flex; flex: 1; height: 20px; box-sizing: border-box; border: 1px solid #ccc; background: #fff; }
  .picker input { flex: 1; }
  .picker button { width: 15px; background: #e1e1e1; border-left: 1px solid #ccc; }
  .picker .hot { background: #e0f0f8; margin: -1px; width: 17px; border: 1px solid #6fa6c4; }
  .caret { width: 1px; margin: 3px 0 3px 3px; background: #444; }
  .push-button { height: 24px; background: #e1e1e1; border: 1px solid #d0d0d0; box-sizing: border-box; }
  .options { align-self: flex-end; width: 93px; margin-top: 6px; }
  .actions { display: flex; gap: 9px; padding: 9px 5px 7px 5px; }
  .w82 { width: 82px; }
  .w73 { width: 73px; }
  .w79 { width: 79px; }
  .apart { margin-left: 9px; }
  .default { border: 2px solid #4394bd; }
  u { text-underline-offset: 1px; }

  .note { position: absolute; left: 163px; top: 368px; width: 863px; height: 135px; margin: 0; background: #fff; color: #e8212f; font-size: 34px; line-height: 65px; font-feature-settings: normal; white-space: nowrap; }

  .sheetbar { display: flex; align-items: center; height: 19px; box-sizing: border-box; background: #e6e6e6; border-top: 1px solid #b8b8b8; border-bottom: 1px solid #cfcfcf; }
  .steps { display: flex; gap: 13px; width: 62px; padding-left: 16px; box-sizing: border-box; }
  .sheet { height: 17px; width: 55px; font-size: 13px; line-height: 16px; border-right: 1px solid #c4c4c4; }
  .sheet.current { background: #fff; color: #217346; border-right: 0; box-shadow: inset 0 -2px #217346; }
  .add { width: 56px; }
  .sheetbar .dots { margin: 0 10px 0 auto; }
  .hscroll { display: flex; height: 15px; width: 463px; margin-right: 17px; }
  .hscroll button { width: 14px; background: #fff; border: 1px solid #d0d0d0; box-sizing: border-box; }
  .hscroll .thumb { flex: 1; background: #fff; border: 1px solid #c0c0c0; border-width: 1px 1px 1px 0; }
  .hscroll .track { width: 24px; background: #d8d8d8; }

  .status { display: flex; align-items: center; height: 23px; background: #f3f3f3; padding-right: 6px; }
  .ready { flex: 1; padding: 2px 0 0 7px; }
  .view { width: 29px; height: 23px; }
  .step { width: 14px; height: 20px; }
  .zoom { appearance: none; width: 88px; height: 11px; background: linear-gradient(#999, #999) center / 100% 1px no-repeat; }
  .zoom::-webkit-slider-thumb { appearance: none; width: 4px; height: 10px; background: #666; }
  .percentage { font-size: 12px; margin-left: 6px; padding-top: 2px; }

  h1 { margin: -10px 0 0 412px; width: 460px; background: #fff; color: #000; font: 400 43px/73px "Noto Sans CJK JP", sans-serif; white-space: nowrap; }
</style>
